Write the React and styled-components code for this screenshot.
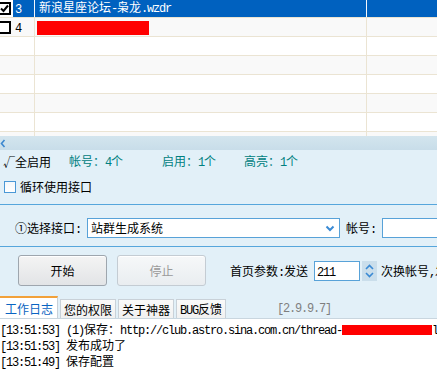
import React from "react"
import styled, { createGlobalStyle } from "styled-components"

const GlobalStyle = createGlobalStyle`
  html, body {
    margin: 0;
    padding: 0;
    background: #fff;
  }
  body {
    font-family: "Noto Sans CJK SC", "Liberation Sans", sans-serif;
    font-size: 12px;
    color: #000;
  }
`

// SimSun-like metrics: ascii runs are half width, CJK full width
const ASCII = /([\x20-\x7e]+)/

const mix = text =>
  text
    .split(ASCII)
    .filter(Boolean)
    .map((part, i) => (ASCII.test(part) ? <Half key={i}>{part}</Half> : part))

const rows = [
  { id: 3, name: "新浪星座论坛-枭龙.wzdr", checked: true, selected: true },
  { id: 4, redacted: 112 },
  {}, {}, {}, {}, {}, {},
]

const logs = [
  { time: "13:51:53", text: "(1)保存：http://club.astro.sina.com.cn/thread-", redacted: 90, tail: "l" },
  { time: "13:51:53", text: "发布成功了" },
  { time: "13:51:49", text: "保存配置" },
]

const Tick = () => (
  <svg width="9" height="9" viewBox="0 0 9 9">
    <polyline points="1,4.5 3.5,7 8,1.5" fill="none" stroke="#000" strokeWidth="2" />
  </svg>
)

const App = () => (
  <>
    <GlobalStyle />
    <Window>
      <Grid>
        <GridBody>
          {rows.map((r, i) => (
            <Row key={i} $striped={i % 2 === 1}>
              <IndexCell $selected={r.selected}>
                {r.id && <RowCheck>{r.checked && <Tick />}</RowCheck>}
                {r.id && <Num $selected={r.selected}>{mix(String(r.id))}</Num>}
              </IndexCell>
              <NameCell $selected={r.selected}>
                {r.name && <span>{mix(r.name)}</span>}
                {r.redacted && <GridRedact style={{ width: r.redacted }} />}
              </NameCell>
              <ExtraCell $selected={r.selected} />
            </Row>
          ))}
        </GridBody>
      </Grid>

      <Splitter>
        <svg width="6" height="9" viewBox="0 0 6 9">
          <polyline points="4.5,1 1.5,4.5 4.5,8" fill="none" stroke="#3b87cf" strokeWidth="1.6" />
        </svg>
      </Splitter>

      <Panel>
        <Stats>
          <Stat>√全启用</Stat>
          <Stat $teal>帐号：{mix("4")}个</Stat>
          <Stat $teal>启用：{mix("1")}个</Stat>
          <Stat $teal>高亮：{mix("1")}个</Stat>
        </Stats>

        <LoopRow>
          <BlueBox />
          <span>循环使用接口</span>
        </LoopRow>

        <SelectRow>
          <FieldLabel>①选择接口{mix(":")}</FieldLabel>
          <Select>
            <span>站群生成系统</span>
            <svg width="10" height="7" viewBox="0 0 10 7">
              <polyline points="1.5,1.5 5,5 8.5,1.5" fill="none" stroke="#3a8ad4" strokeWidth="2" />
            </svg>
          </Select>
          <FieldLabel>帐号{mix(":")}</FieldLabel>
          <TextInput />
        </SelectRow>

        <ActionRow>
          <Button>开始</Button>
          <Button disabled>停止</Button>
          <Param>首页参数{mix(":")}发送</Param>
          <NumberInput>{mix("211")}</NumberInput>
          <Spinner>
            <svg width="11" height="18" viewBox="0 0 11 18">
              <polyline points="2,7 5.5,3.5 9,7" fill="none" stroke="#3a8ad4" strokeWidth="1.6" />
              <polyline points="2,11 5.5,14.5 9,11" fill="none" stroke="#3a8ad4" strokeWidth="1.6" />
            </svg>
          </Spinner>
          <Param $tight>次换帐号{mix(",")}发</Param>
        </ActionRow>

        <TabBar>
          <Tab $active>工作日志</Tab>
          <Tab>您的权限</Tab>
          <Tab>关于神器</Tab>
          <Tab><span>{mix("BUG")}反馈</span></Tab>
          <Version>{mix("[2.9.9.7]")}</Version>
        </TabBar>
      </Panel>

      <Log>
        {logs.map((l, i) => (
          <LogLine key={i}>
            {mix(`[${l.time}] ${l.text}`)}
            {l.redacted && <LogRedact style={{ width: l.redacted }} />}
            {l.tail && mix(l.tail)}
          </LogLine>
        ))}
      </Log>
    </Window>
  </>
)

export default App

const Half = styled.span`
  font-family: "Liberation Mono", monospace;
  font-size: 12px;
  letter-spacing: -1.2px;
  white-space: pre;
`

const Window = styled.div`
  width: 437px;
  height: 370px;
  overflow: hidden;
  display: flex;
  flex-direction: column;
  background: #e2f0f8;
`

const Grid = styled.div`
  height: 136px;
  flex-shrink: 0;
  overflow: hidden;
  background: #fff;
`

const GridBody = styled.div`
  margin-top: -1px;
`

const Row = styled.div`
  display: flex;
  height: 18px;
  border-bottom: 1px solid #ebe4d3;
  background: ${p => (p.$striped ? "#f9f9f9" : "#fff")};
  line-height: 18px;
  white-space: nowrap;
`

const IndexCell = styled.div`
  width: 34px;
  flex-shrink: 0;
  display: flex;
  align-items: center;
  border-right: 1px solid ${p => (p.$selected ? "#f4f7fb" : "#ebe4d3")};
`

const RowCheck = styled.span`
  width: 13px;
  height: 13px;
  margin-left: -2px;
  box-sizing: border-box;
  border: 2px solid #000;
  background: #fff;
  display: flex;
  align-items: center;
  justify-content: center;
  flex-shrink: 0;
`

const Num = styled.span`
  align-self: stretch;
  flex: 1;
  margin-left: 2px;
  padding-left: 2px;
  background: ${p => (p.$selected ? "#0061bf" : "transparent")};
  color: ${p => (p.$selected ? "#fff" : "#000")};
`

const NameCell = styled.div`
  width: 332px;
  flex-shrink: 0;
  box-sizing: border-box;
  padding-left: 4px;
  display: flex;
  align-items: center;
  overflow: hidden;
  background: ${p => (p.$selected ? "#0061bf" : "transparent")};
  color: ${p => (p.$selected ? "#fff" : "#000")};
  border-right: 1px solid ${p => (p.$selected ? "#f4f7fb" : "#ebe4d3")};
`

const ExtraCell = styled.div`
  flex: 1;
  background: ${p => (p.$selected ? "#0061bf" : "transparent")};
`

const GridRedact = styled.span`
  display: block;
  height: 14px;
  margin-left: -2px;
  margin-top: 2px;
  background: #ff0000;
`

const Splitter = styled.div`
  height: 14px;
  flex-shrink: 0;
  display: flex;
  align-items: center;
  background: linear-gradient(#d3e5ee, #c8dde9);
`

const Panel = styled.div`
  display: flex;
  flex-direction: column;
  flex-shrink: 0;
  background: #e2f0f8;
`

const Stats = styled.div`
  height: 22px;
  display: grid;
  grid-template-columns: 66px 93px 82px auto;
  align-items: center;
  padding-left: 3px;
  white-space: nowrap;
`

const Stat = styled.span`
  color: ${p => (p.$teal ? "#008080" : "#000")};
`

const LoopRow = styled.div`
  height: 33px;
  box-sizing: border-box;
  padding: 8px 0 0 4px;
  display: flex;
  align-items: flex-start;
  gap: 4px;
  line-height: 14px;
  border-bottom: 1px solid #56a6dc;
`

const BlueBox = styled.span`
  width: 12px;
  height: 12px;
  box-sizing: border-box;
  border: 1px solid #4a98d6;
  background: linear-gradient(#f4f8fb, #fff);
  margin-top: 1px;
`

const SelectRow = styled.div`
  height: 42px;
  box-sizing: border-box;
  padding: 13px 0 0 15px;
  display: flex;
  align-items: flex-start;
  gap: 6px;
  border-bottom: 1px solid #56a6dc;
  white-space: nowrap;
`

const FieldLabel = styled.span`
  line-height: 20px;
  flex-shrink: 0;
`

const Select = styled.div`
  width: 253px;
  height: 20px;
  flex-shrink: 0;
  box-sizing: border-box;
  border: 1px solid #58a2d8;
  background: #fff;
  display: flex;
  align-items: center;
  justify-content: space-between;
  padding: 0 4px 0 3px;
  line-height: 18px;
`

const TextInput = styled.div`
  width: 80px;
  height: 20px;
  box-sizing: border-box;
  flex-shrink: 0;
  border: 1px solid #58a2d8;
  background: #fff;
`

const ActionRow = styled.div`
  height: 48px;
  box-sizing: border-box;
  padding: 8px 0 0 18px;
  display: flex;
  align-items: flex-start;
  white-space: nowrap;
`

const Button = styled.div`
  width: 89px;
  height: 31px;
  flex-shrink: 0;
  box-sizing: border-box;
  margin-right: 10px;
  border: 1px solid ${p => (p.disabled ? "#c4ccd3" : "#9ea6ae")};
  border-radius: 3px;
  background: ${p =>
    p.disabled
      ? "linear-gradient(#f6f8f9, #e9edf0)"
      : "linear-gradient(#f4f4f4, #e2e4e6)"};
  color: ${p => (p.disabled ? "#9a9a9a" : "#000")};
  display: flex;
  align-items: center;
  justify-content: center;
  box-shadow: inset 0 1px 0 #fff;
`

const Param = styled.span`
  flex-shrink: 0;
  line-height: 31px;
  margin-left: ${p => (p.$tight ? "4px" : "14px")};
`

const NumberInput = styled.div`
  width: 46px;
  height: 20px;
  flex-shrink: 0;
  box-sizing: border-box;
  margin: 6px 0 0 6px;
  padding-left: 2px;
  border: 1px solid #58a2d8;
  background: #fff;
  line-height: 18px;
`

const Spinner = styled.div`
  width: 15px;
  height: 20px;
  flex-shrink: 0;
  margin: 6px 0 0 2px;
  background: #cadeeb;
  display: flex;
  align-items: center;
  justify-content: center;
`

const TabBar = styled.div`
  height: 23px;
  display: flex;
  align-items: flex-end;
  gap: 2px;
  white-space: nowrap;
`

const Tab = styled.div`
  height: ${p => (p.$active ? "22px" : "19px")};
  box-sizing: border-box;
  padding: ${p => (p.$active ? "0 4px 0 5px" : "0 3px")};
  display: flex;
  align-items: center;
  background: ${p => (p.$active ? "#fff" : "linear-gradient(#fafafa, #f1f1f1)")};
  color: ${p => (p.$active ? "#0a64c2" : "#000")};
  border: 1px solid #c9d1d8;
  border-bottom: none;
  border-top: ${p => (p.$active ? "2px solid #f2a13a" : "1px solid #c9d1d8")};
  ${p => p.$active && "border-left: none;"}
`

const Version = styled.span`
  align-self: center;
  margin-left: 49px;
  color: #7f7f7f;
`

const Log = styled.div`
  flex: 1;
  background: #fff;
  border-top: 1px solid #c9d6df;
  padding-top: 2px;
`

const LogLine = styled.div`
  height: 16px;
  line-height: 16px;
  white-space: nowrap;
`

const LogRedact = styled.span`
  display: inline-block;
  height: 10px;
  vertical-align: -1px;
  background: #ff0000;
`
